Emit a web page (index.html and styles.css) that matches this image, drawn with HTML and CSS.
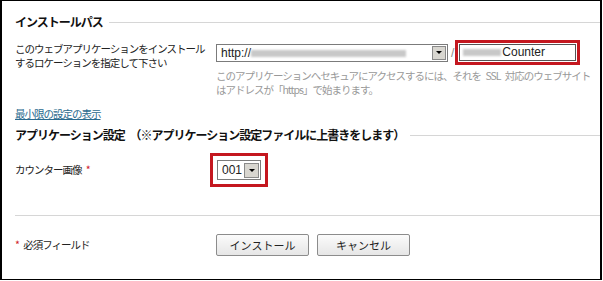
FILE: index.html
```html
<!DOCTYPE html>
<html>
  <head>
    <meta charset="UTF-8" />
    <title>インストール</title>
    <link rel="stylesheet" href="styles.css">
  </head>
  <body>
    <div class="frame">
      <div class="section-title">
        <span>インストールパス</span>
        <span class="rule"></span>
      </div>

      <div class="row path-row">
        <div class="label">このウェブアプリケーションをインストール<br>するロケーションを指定して下さい</div>
        <div class="field">
          <div class="path-line">
            <div class="combo url-combo">
              <span class="combo-text">http://<span class="masked wide"></span></span>
              <span class="combo-btn"><span class="arrow"></span></span>
            </div>
            <span class="slash">/</span>
            <div class="mark">
              <div class="textbox"><span class="masked short"></span>Counter</div>
            </div>
          </div>
          <p class="help">このアプリケーションへセキュアにアクセスするには、それを SSL 対応のウェブサイト<br>はアドレスが「https」で始まります。</p>
        </div>
      </div>

      <a class="toggle" href="#">最小限の設定の表示</a>

      <div class="section-title second">
        <span>アプリケーション設定 （※アプリケーション設定ファイルに上書きをします）</span>
        <span class="rule"></span>
      </div>

      <div class="row counter-row">
        <div class="label">カウンター画像 <span class="req">*</span></div>
        <div class="field">
          <div class="mark small-mark">
            <div class="combo">
              <span class="combo-text">001</span>
              <span class="combo-btn"><span class="arrow"></span></span>
            </div>
          </div>
        </div>
      </div>

      <div class="divider"></div>

      <div class="row footer-row">
        <div class="label"><span class="req">*</span> 必須フィールド</div>
        <div class="field buttons">
          <button type="button" class="btn">インストール</button>
          <button type="button" class="btn">キャンセル</button>
        </div>
      </div>
    </div>
  </body>
</html>
```

FILE: styles.css
```css
body {
  margin: 0;
  background-color: #fff;
  font-family: "Noto Sans CJK JP", "DejaVu Sans", sans-serif;
  font-size: 10.5px;
  letter-spacing: -1px;
  word-spacing: 3px;
  color: #222;
}

.frame {
  box-sizing: border-box;
  width: 602px;
  height: 280px;
  border: 1px solid #000;
  border-left-width: 2px;
  border-right-width: 2px;
  padding: 13px 0 0 13px;
  overflow: hidden;
}

.section-title {
  display: flex;
  align-items: center;
  gap: 6px;
  font-size: 12px;
  font-weight: bold;
  line-height: 16px;
  color: #111;
}

.section-title .rule {
  flex: 1;
  border-top: 1px solid #d6d6d6;
}

.section-title.second {
  margin-top: 5px;
}

.row {
  display: grid;
  grid-template-columns: 201px 1fr;
}

.label {
  line-height: 14px;
  white-space: nowrap;
}

.path-row {
  margin-top: 10px;
}

.path-row .label {
  padding-top: 2px;
}

.path-line {
  display: flex;
  align-items: center;
}

.combo {
  display: flex;
  align-items: center;
  height: 18px;
  box-sizing: border-box;
  border: 1px solid #7b7b7b;
  background: #fff;
  padding: 1px;
  letter-spacing: 0;
  word-spacing: 0;
}

.url-combo {
  width: 232px;
}

.combo-text {
  flex: 1;
  padding-left: 3px;
  font-family: "Liberation Sans", sans-serif;
  font-size: 12px;
  line-height: 14px;
  white-space: nowrap;
  overflow: hidden;
}

.combo-btn {
  width: 14px;
  height: 14px;
  box-sizing: border-box;
  background: #d8d6d0;
  border: 1px solid #8a8a8a;
  display: flex;
  align-items: center;
  justify-content: center;
}

.arrow {
  width: 0;
  height: 0;
  border-left: 3px solid transparent;
  border-right: 3px solid transparent;
  border-top: 3px solid #000;
}

.masked {
  display: inline-block;
  height: 7px;
  vertical-align: middle;
  background: #c8c8c8;
  filter: blur(1.2px);
}

.masked.wide {
  width: 155px;
}

.masked.short {
  width: 38px;
  margin-right: 1px;
}

.slash {
  margin: 0 2px 0 3px;
  font-family: "Liberation Sans", sans-serif;
  font-size: 12px;
  color: #888;
}

.mark {
  border: 3px solid #c4171f;
  padding: 1px;
}

.textbox {
  width: 117px;
  height: 17px;
  box-sizing: border-box;
  border: 1px solid #555;
  padding-left: 3px;
  font-family: "Liberation Sans", sans-serif;
  font-size: 12px;
  line-height: 15px;
  letter-spacing: 0;
  word-spacing: 0;
  white-space: nowrap;
}

.help {
  margin: 4px 0 0;
  color: #999;
  line-height: 14px;
  white-space: nowrap;
}

.toggle {
  display: inline-block;
  margin-top: 9px;
  color: #2a6a8e;
  text-decoration: underline;
  line-height: 16px;
}

.counter-row {
  margin-top: 10px;
  align-items: center;
}

.small-mark {
  display: inline-block;
  margin-left: -6px;
  padding: 4px;
}

.small-mark .combo {
  width: 44px;
  height: 20px;
}

.small-mark .combo-btn {
  width: 15px;
  height: 15px;
}

.req {
  color: #d0202a;
}

.divider {
  margin-top: 28px;
  border-top: 1px solid #d6d6d6;
}

.footer-row {
  margin-top: 18px;
  align-items: center;
}

.buttons {
  display: flex;
  gap: 8px;
}

.btn {
  width: 93px;
  height: 22px;
  font-family: inherit;
  font-size: 11px;
  letter-spacing: 0;
  word-spacing: 0;
  color: #222;
  border: 1px solid #8c8c8c;
  border-radius: 2px;
  background: linear-gradient(#fbfbfb, #e6e6e6);
  padding: 0;
}
```
